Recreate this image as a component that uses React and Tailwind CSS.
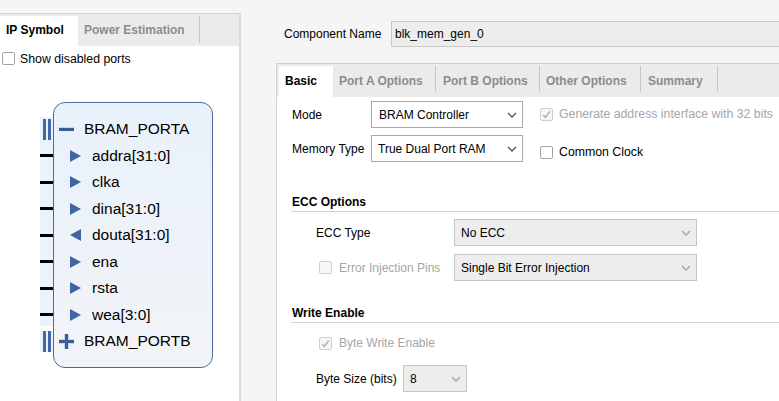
import React from "react";

const Tri = ({ left }) => (
  <svg width="11" height="12" viewBox="0 0 11 12" className="shrink-0">
    <polygon points={left ? "11,0 0,6 11,12" : "0,0 11,6 0,12"} fill="#4264a5" />
  </svg>
);

const Chevron = ({ light }) => (
  <svg width="10" height="6" viewBox="0 0 10 6" className="shrink-0">
    <path d="M1 1 L5 5 L9 1" stroke={light ? "#a9a9a9" : "#5c5c5c"} strokeWidth="1.5" fill="none" />
  </svg>
);

const Check = ({ checked, disabled }) => (
  <div
    className={
      disabled
        ? "w-[13px] h-[13px] shrink-0 rounded-[2px] border border-[#cfcfcf] bg-[#f6f6f6] flex items-center justify-center"
        : "w-[13px] h-[13px] shrink-0 rounded-[2px] border border-[#a3a3a3] bg-white flex items-center justify-center"
    }
  >
    {checked && (
      <svg width="9" height="9" viewBox="0 0 9 9">
        <path d="M1.2 5 L3.4 7.4 L7.8 1.4" stroke="#ababab" strokeWidth="1.3" fill="none" />
      </svg>
    )}
  </div>
);

const pins = [
  { name: "addra[31:0]" },
  { name: "clka" },
  { name: "dina[31:0]" },
  { name: "douta[31:0]", out: true },
  { name: "ena" },
  { name: "rsta" },
  { name: "wea[3:0]" },
];

const BusBars = () => (
  <div className="h-[26.5px] flex items-center pl-[3px] gap-[2.5px]">
    <div className="w-[2.5px] h-[21px] bg-[#4168a6]" />
    <div className="w-[2.5px] h-[21px] bg-[#4168a6]" />
  </div>
);

export default function App() {
  return (
    <div className="w-[779px] h-[401px] overflow-hidden bg-[#f5f5f5] flex font-['Liberation_Sans',Arial,sans-serif] text-[12px] text-black">
      {/* Left panel */}
      <div className="mt-[13px] w-[241px] shrink-0 flex flex-col border-t border-t-[#d3d3d3] border-r-2 border-r-[#dadada]">
        <div className="h-[32px] bg-[#ebebeb] flex items-end">
          <div className="w-[78px] h-[30px] bg-white flex items-center pl-[6px] pb-[3px] font-bold">IP Symbol</div>
          <div className="w-[121px] h-[30px] flex items-center pl-[6px] pb-[3px] font-bold text-[#8c8c8c]">Power Estimation</div>
          <div className="w-px h-[27px] mb-[3px] bg-[#c6c6c6]" />
        </div>
        <div className="flex-1 bg-white flex flex-col">
          <div className="mt-[6px] ml-[2px] h-[13px] flex items-center leading-none">
            <Check />
            <span className="ml-[5px] mt-[1px] text-[12.3px]">Show disabled ports</span>
          </div>
          <div className="mt-[37px] ml-[40px] flex">
            <div className="w-[13px] pt-[13.75px] flex flex-col">
              <div className="flex flex-col bg-[linear-gradient(to_bottom,transparent_1px,#eaf2fc_1px,#eaf2fc_calc(100%-2px),transparent_calc(100%-2px))]">
                <BusBars />
                {pins.map((p) => (
                  <div key={p.name} className="h-[26.5px] flex items-center">
                    <div className="w-[13px] h-[3px] bg-black" />
                  </div>
                ))}
              </div>
              <div className="bg-[linear-gradient(to_bottom,transparent_2.5px,#eaf2fc_2.5px,#eaf2fc_calc(100%-2px),transparent_calc(100%-2px))]">
                <BusBars />
              </div>
            </div>
            <div className="w-[160px] border border-[#4a68a5] rounded-[12px] bg-gradient-to-b from-[#e9f1fb] to-[#f2f4f7] py-[12.75px] flex flex-col text-[15.5px] leading-none">
              <div className="h-[26.5px] flex items-center pl-[5px]">
                <div className="w-[15px] h-[3px] bg-[#3d5b96] shadow-[0_-1px_0_#c9d4e8]" />
                <span className="ml-[10px]">BRAM_PORTA</span>
              </div>
              {pins.map((p) => (
                <div key={p.name} className="h-[26.5px] flex items-center pl-[16px]">
                  <Tri left={p.out} />
                  <span className="ml-[11px]">{p.name}</span>
                </div>
              ))}
              <div className="h-[26.5px] flex items-center pl-[5px]">
                <svg width="15" height="15" viewBox="0 0 15 15" className="shrink-0">
                  <rect x="0" y="5" width="15" height="5" fill="#c9d4e8" />
                  <rect x="5" y="0" width="5" height="15" fill="#c9d4e8" />
                  <rect x="0" y="6" width="15" height="3" fill="#3d5b96" />
                  <rect x="6" y="0" width="3" height="15" fill="#3d5b96" />
                </svg>
                <span className="ml-[10px]">BRAM_PORTB</span>
              </div>
            </div>
          </div>
        </div>
      </div>

      {/* Right panel */}
      <div className="flex-1 min-w-0 flex flex-col pt-[21px]">
        <div className="h-[26px] flex items-center -mr-[20px]">
          <span className="ml-[43px] w-[107px] shrink-0">Component Name</span>
          <div className="flex-1 h-full border border-[#c8c8c8] bg-[#ededed] flex items-center pl-[3px]">blk_mem_gen_0</div>
        </div>

        <div className="mt-[16px] ml-[35px] -mr-[20px] flex-1 flex flex-col border-l border-t border-[#d1d1d1]">
          <div className="h-[33px] shrink-0 bg-[#ebebeb] flex items-start pl-[2px] pt-[2px] font-bold text-[#8c8c8c]">
            <div className="w-[54px] h-[31px] bg-white text-black flex items-center pl-[6px] pb-[2px]">Basic</div>
            <div className="w-[102px] h-[31px] flex items-center pl-[6px] pb-[2px]">Port A Options</div>
            <div className="w-px h-[26px] bg-[#c4c4c4]" />
            <div className="w-[103px] h-[31px] flex items-center pl-[7px] pb-[2px]">Port B Options</div>
            <div className="w-px h-[26px] bg-[#c4c4c4]" />
            <div className="w-[100px] h-[31px] flex items-center pl-[6px] pb-[2px]">Other Options</div>
            <div className="w-px h-[26px] bg-[#c4c4c4]" />
            <div className="w-[76px] h-[31px] flex items-center pl-[7px] pb-[2px]">Summary</div>
            <div className="w-px h-[26px] bg-[#c4c4c4]" />
          </div>

          <div className="flex-1 bg-white flex flex-col">
            {/* Mode */}
            <div className="mt-[4px] h-[27px] flex items-center">
              <span className="w-[94px] shrink-0 pl-[15px]">Mode</span>
              <div className="w-[152px] h-full shrink-0 border border-[#a9a9a9] bg-white flex items-center justify-between pl-[7px] pr-[5px]">
                <span>BRAM Controller</span>
                <Chevron />
              </div>
              <div className="ml-[17px] flex items-center">
                <Check checked disabled />
                <span className="ml-[6px] text-[#a6a6a6] text-[12.3px]">Generate address interface with 32 bits</span>
              </div>
            </div>
            {/* Memory Type */}
            <div className="mt-[7px] h-[27px] flex items-center">
              <span className="w-[94px] shrink-0 pl-[15px]">Memory Type</span>
              <div className="w-[152px] h-full shrink-0 border border-[#a9a9a9] bg-white flex items-center justify-between pl-[6px] pr-[5px]">
                <span>True Dual Port RAM</span>
                <Chevron />
              </div>
              <div className="ml-[17px] flex items-center mt-[7px]">
                <Check />
                <span className="ml-[6px] text-[12.3px]">Common Clock</span>
              </div>
            </div>

            {/* ECC Options */}
            <div className="mt-[31px] ml-[14px] h-[19px] border-b border-[#d3d3d3] flex items-center pl-[1px] font-bold">ECC Options</div>
            <div className="mt-[7px] h-[27px] flex items-center">
              <span className="w-[177px] shrink-0 pl-[39px]">ECC Type</span>
              <div className="w-[243px] h-full shrink-0 border border-[#c6c6c6] bg-[#ededed] flex items-center justify-between pl-[6px] pr-[5px]">
                <span>No ECC</span>
                <Chevron light />
              </div>
            </div>
            <div className="mt-[8px] h-[27px] flex items-center">
              <div className="w-[177px] shrink-0 pl-[42px] flex items-center">
                <Check disabled />
                <span className="ml-[7px] text-[#a6a6a6]">Error Injection Pins</span>
              </div>
              <div className="w-[243px] h-full shrink-0 border border-[#c6c6c6] bg-[#ededed] flex items-center justify-between pl-[6px] pr-[5px]">
                <span>Single Bit Error Injection</span>
                <Chevron light />
              </div>
            </div>

            {/* Write Enable */}
            <div className="mt-[23px] ml-[14px] h-[19px] border-b border-[#d3d3d3] flex items-center pl-[1px] font-bold">Write Enable</div>
            <div className="mt-[13px] h-[14px] flex items-center pl-[42px]">
              <Check checked disabled />
              <span className="ml-[7px] text-[#a6a6a6]">Byte Write Enable</span>
            </div>
            <div className="mt-[15px] h-[27px] flex items-center">
              <span className="w-[126px] shrink-0 pl-[39px]">Byte Size (bits)</span>
              <div className="w-[64px] h-full shrink-0 border border-[#c6c6c6] bg-[#ededed] flex items-center justify-between pl-[6px] pr-[5px]">
                <span>8</span>
                <Chevron light />
              </div>
            </div>
          </div>
        </div>
      </div>
    </div>
  );
}
